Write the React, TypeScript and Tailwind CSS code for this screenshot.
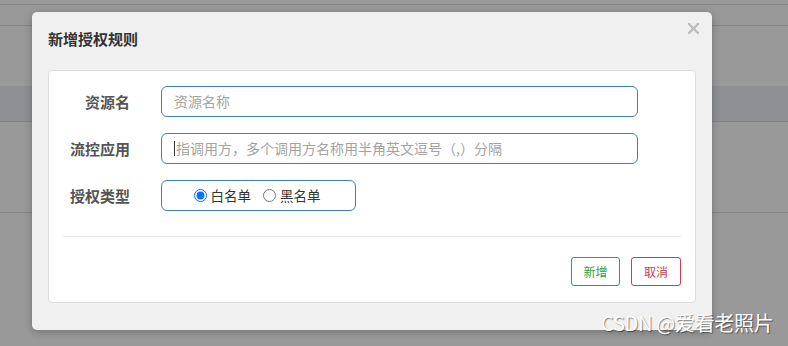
import { useState } from "react";

const font = { fontFamily: '"Noto Sans CJK SC", "Noto Sans", sans-serif' };

const BackgroundPage = () => {
    return (
        <div className="flex flex-col w-full h-[346px] bg-[#999999]">
            <div className="h-[5px] border-b border-[#868686]" />
            <div className="h-[21px] border-b border-[#868686]" />
            <div className="h-[60px]" />
            <div className="h-[36px] bg-[#8f9093] border-b border-[#838383]" />
            <div className="h-[91px] border-b border-[#868686]" />
        </div>
    );
};

const Row = ({ label, children }: { label: string; children: React.ReactNode }) => (
    <div className="flex flex-row items-center">
        <label className="w-[81px] text-right text-[15px] font-bold text-[#555] leading-[20px]">{label}</label>
        <div className="ml-[31px]">{children}</div>
    </div>
);

const App = () => {
    const [type, setType] = useState('white');

    return (
        <div className="relative w-[788px] h-[346px] overflow-hidden" style={font}>
            <BackgroundPage />

            <div className="absolute left-[32px] top-[12px] w-[680px] h-[318px] bg-[#f0f0f0] rounded-[5px] shadow-[0_2px_8px_rgba(0,0,0,0.25)] flex flex-col">
                <div className="h-[58px] pt-[17px] pl-[16px]">
                    <h4 className="text-[15px] font-bold text-[#333] leading-[20px]">新增授权规则</h4>
                </div>
                <button type="button" className="absolute right-[13px] top-[11px] w-[11px] h-[11px]">
                    <svg width="11" height="11" viewBox="0 0 11 11">
                        <path d="M1 1 L10 10 M10 1 L1 10" stroke="#bdbdbd" strokeWidth="2.4" strokeLinecap="square" />
                    </svg>
                </button>

                <div className="mx-[16px] h-[233px] bg-white border border-[#dcdcdc] rounded-[4px] flex flex-col">
                    <div className="flex flex-col gap-[16px] pt-[15px]">
                        <Row label="资源名">
                            <div className="w-[477px] h-[31px] border border-[#3c7fc4] rounded-[6px] flex items-center px-[12px] text-[14px] text-[#a3a3a3]">
                                资源名称
                            </div>
                        </Row>
                        <Row label="流控应用">
                            <div className="w-[477px] h-[31px] border border-[#3c7fc4] rounded-[6px] flex items-center px-[12px] text-[14px] text-[#a3a3a3]">
                                <span className="w-px h-[15px] bg-[#333] mr-[1px]" />
                                指调用方，多个调用方名称用半角英文逗号（,）分隔
                            </div>
                        </Row>
                        <Row label="授权类型">
                            <div className="w-[195px] h-[31px] border border-[#3c7fc4] rounded-[6px] flex items-center justify-center text-[13.5px] text-[#333]">
                                <label className="flex items-center gap-[4px] mr-[12px] -ml-[3px]">
                                    <input type="radio" name="strategy" checked={type === 'white'} onChange={() => setType('white')} className="m-0 w-[13px] h-[13px]" />
                                    白名单
                                </label>
                                <label className="flex items-center gap-[4px]">
                                    <input type="radio" name="strategy" checked={type === 'black'} onChange={() => setType('black')} className="m-0 w-[13px] h-[13px]" />
                                    黑名单
                                </label>
                            </div>
                        </Row>
                    </div>

                    <div className="mx-[14px] mt-[25px] border-t border-[#e5e5e5]" />

                    <div className="flex flex-row justify-end gap-[11px] mx-[14px] mt-[20px]">
                        <button type="button" className="w-[49px] h-[29px] border border-[#28a745] rounded-[3px] text-[12px] text-[#28a745] bg-white">新增</button>
                        <button type="button" className="w-[50px] h-[29px] border border-[#dc3545] rounded-[3px] text-[12px] text-[#dc3545] bg-white">取消</button>
                    </div>
                </div>
            </div>

            <div className="absolute left-[601px] top-[309px] text-[20px] text-white leading-[28px] tracking-[-0.3px] [text-shadow:1px_1px_1px_rgba(0,0,0,0.45)]">
                CSDN @爱看老照片
            </div>
        </div>
    );
};

export default App;
